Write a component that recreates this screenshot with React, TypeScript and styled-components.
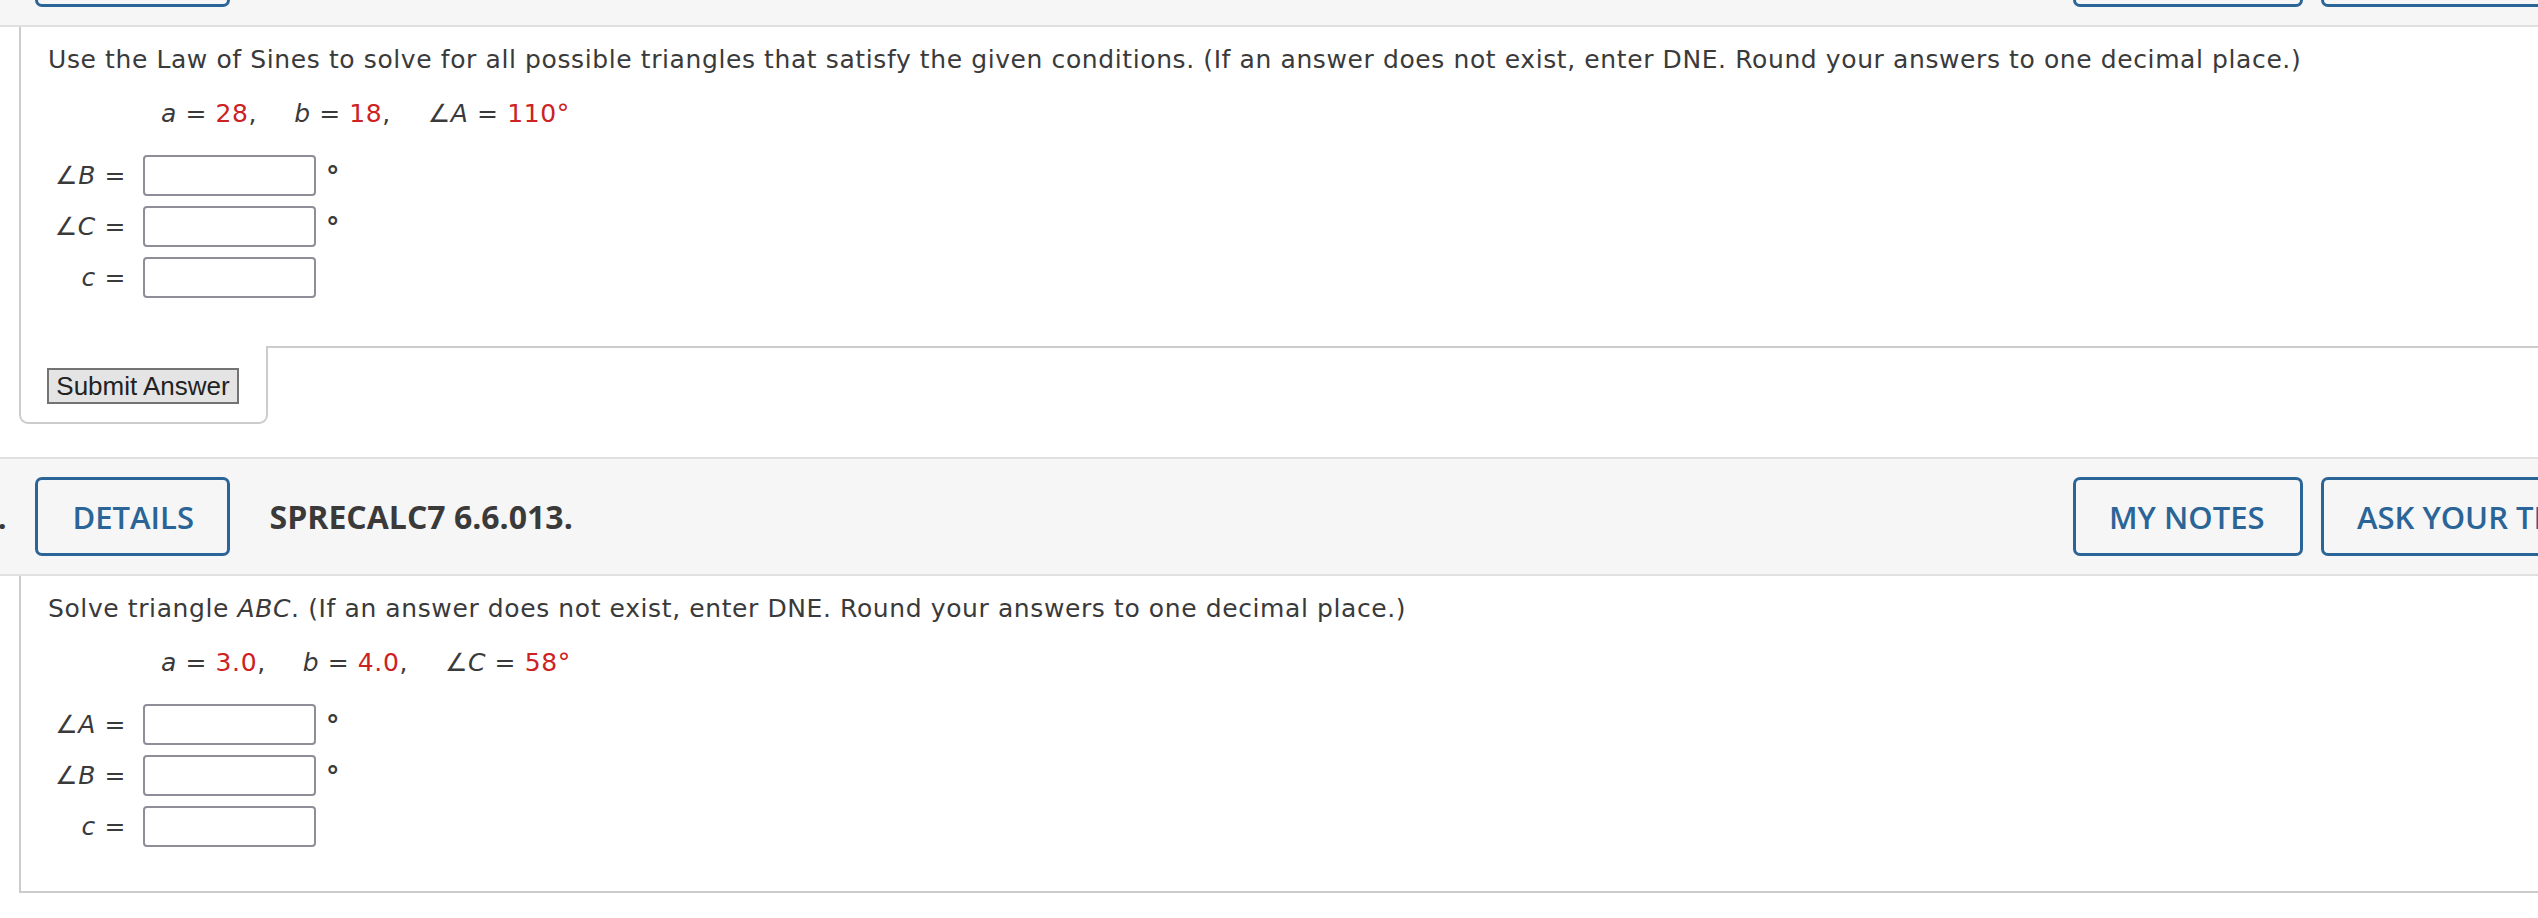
import { createGlobalStyle, styled } from 'styled-components';

const GlobalStyle = createGlobalStyle`
  html, body {
    margin: 0;
    padding: 0;
    background: #ffffff;
    overflow: hidden;
  }
`;

const Page = styled.div`
  width: 2680px;
  margin-top: -92px;
  font-family: 'DejaVu Sans', Verdana, sans-serif;
  color: #3a3a3a;
`;

const Header = styled.div`
  display: flex;
  align-items: center;
  height: 115px;
  padding-right: 29px;
  background: #f6f6f6;
  border-top: 2px solid #e0e0e0;
  border-bottom: 2px solid #e0e0e0;
  font-family: 'Open Sans', 'Liberation Sans', sans-serif;
`;

const QuestionNumber = styled.span`
  margin-left: -20px;
  margin-right: 28px;
  font-size: 31px;
  font-weight: 700;
  color: #3a3a3a;
`;

const HeaderButton = styled.button<{ $width: number }>`
  box-sizing: border-box;
  width: ${(p) => p.$width}px;
  height: 79px;
  flex-shrink: 0;
  background: transparent;
  border: 3px solid #2b6496;
  border-radius: 7px;
  color: #2b6496;
  font-family: 'Open Sans', 'Liberation Sans', sans-serif;
  font-size: 31px;
  font-weight: 600;
  text-align: left;
  white-space: nowrap;
  padding: 0 0 0 ${(p) => (p.$width === 195 ? 35 : 33)}px;
`;

const Title = styled.h3`
  margin: 0 0 0 40px;
  font-size: 32px;
  font-weight: 700;
  color: #3a3a3a;
`;

const Actions = styled.div`
  display: flex;
  gap: 18px;
  margin-left: auto;
`;

const Body = styled.div<{ $closed?: boolean }>`
  margin-left: 19px;
  border-left: 2px solid #cccccc;
  border-bottom: ${(p) => (p.$closed ? '2px solid #cccccc' : 'none')};
  padding: 19px 0 ${(p) => (p.$closed ? 44 : 48)}px 27px;
`;

const Prompt = styled.p`
  margin: 0;
  font-size: 25px;
  letter-spacing: 0.6px;
  line-height: 28px;
`;

const Given = styled.div`
  display: flex;
  gap: 37px;
  margin-top: 26px;
  padding-left: 113px;
  font-size: 25px;
  letter-spacing: 0.6px;
  line-height: 28px;
`;

const Value = styled.span`
  color: #cc2222;
`;

const Answers = styled.div`
  display: flex;
  flex-direction: column;
  gap: 10px;
  margin-top: 27px;
`;

const AnswerRow = styled.div`
  display: flex;
  align-items: center;
  font-size: 25px;
  letter-spacing: 0.6px;
`;

const Label = styled.span`
  width: 78px;
  margin-right: 17px;
  text-align: right;
  white-space: nowrap;
`;

const AnswerInput = styled.input`
  box-sizing: border-box;
  width: 173px;
  height: 41px;
  border: 2px solid #8e8e99;
  border-radius: 4px;
  background: #ffffff;
`;

const Degree = styled.span`
  margin-left: 10px;
  font-size: 27px;
  font-weight: 700;
`;

const Footer = styled.div`
  display: flex;
  margin-bottom: 33px;
`;

const SubmitTab = styled.div`
  margin-left: 19px;
  padding: 22px 27px 18px 26px;
  border: 2px solid #cccccc;
  border-top: none;
  border-radius: 0 0 9px 9px;
`;

const SubmitButton = styled.button`
  box-sizing: border-box;
  width: 192px;
  height: 36px;
  padding: 0;
  background: #e4e4e4;
  border: 2px solid #737373;
  color: #222222;
  font-family: 'Liberation Sans', Arial, sans-serif;
  font-size: 26px;
  line-height: 30px;
`;

const Filler = styled.div`
  flex: 1;
  border-top: 2px solid #cccccc;
`;

type Row = { label: React.ReactNode; degree?: boolean };

function QuestionHeader({ num, code }: { num: number; code: string }) {
  return (
    <Header>
      <QuestionNumber>{num}.</QuestionNumber>
      <HeaderButton $width={195}>DETAILS</HeaderButton>
      <Title>{code}</Title>
      <Actions>
        <HeaderButton $width={230}>MY NOTES</HeaderButton>
        <HeaderButton $width={330}>ASK YOUR TEACHER</HeaderButton>
      </Actions>
    </Header>
  );
}

function AnswerList({ rows }: { rows: Row[] }) {
  return (
    <Answers>
      {rows.map((row, key) => (
        <AnswerRow key={key}>
          <Label>{row.label} =</Label>
          <AnswerInput type="text" />
          {row.degree && <Degree>°</Degree>}
        </AnswerRow>
      ))}
    </Answers>
  );
}

export default function App() {
  return (
    <Page>
      <GlobalStyle />
      <QuestionHeader num={1} code="SPRECALC7 6.6.005." />
      <Body>
        <Prompt>
          Use the Law of Sines to solve for all possible triangles that satisfy the given conditions. (If an
          answer does not exist, enter DNE. Round your answers to one decimal place.)
        </Prompt>
        <Given>
          <span>
            <i>a</i> = <Value>28</Value>,
          </span>
          <span>
            <i>b</i> = <Value>18</Value>,
          </span>
          <span>
            ∠<i>A</i> = <Value>110°</Value>
          </span>
        </Given>
        <AnswerList
          rows={[
            { label: <>∠<i>B</i></>, degree: true },
            { label: <>∠<i>C</i></>, degree: true },
            { label: <i>c</i> },
          ]}
        />
      </Body>
      <Footer>
        <SubmitTab>
          <SubmitButton>Submit Answer</SubmitButton>
        </SubmitTab>
        <Filler />
      </Footer>

      <QuestionHeader num={2} code="SPRECALC7 6.6.013." />
      <Body $closed>
        <Prompt>
          Solve triangle <i>ABC</i>. (If an answer does not exist, enter DNE. Round your answers to one
          decimal place.)
        </Prompt>
        <Given>
          <span>
            <i>a</i> = <Value>3.0</Value>,
          </span>
          <span>
            <i>b</i> = <Value>4.0</Value>,
          </span>
          <span>
            ∠<i>C</i> = <Value>58°</Value>
          </span>
        </Given>
        <AnswerList
          rows={[
            { label: <>∠<i>A</i></>, degree: true },
            { label: <>∠<i>B</i></>, degree: true },
            { label: <i>c</i> },
          ]}
        />
      </Body>
    </Page>
  );
}
